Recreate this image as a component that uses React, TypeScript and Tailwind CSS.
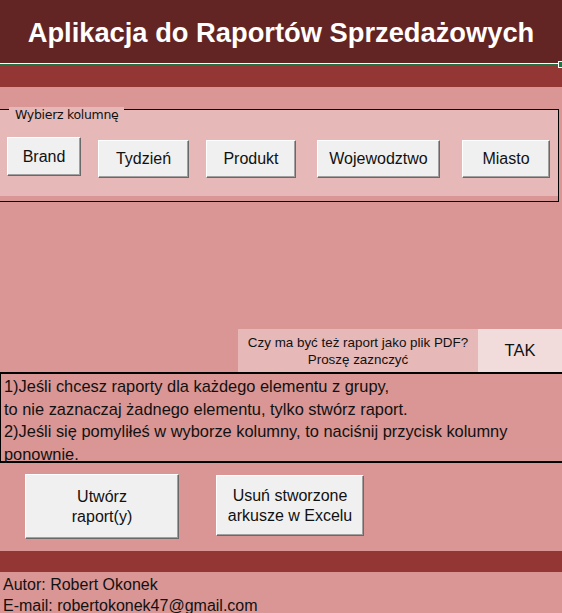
const btn =
  "flex items-center justify-center bg-[#f0f0f0] border border-t-white border-l-white border-r-[#696969] border-b-[#696969] shadow-[inset_-1px_-1px_0_#a0a0a0] text-[16px] text-[#111]";

function ColumnButton({ label, className }: { label: string; className: string }) {
  return <div className={`${btn} ${className}`}>{label}</div>;
}

export default function App() {
  return (
    <div className="w-[562px] h-[613px] overflow-hidden bg-[#d99694] font-['Liberation_Sans',Arial,sans-serif] text-[#111]">
      {/* Header */}
      <div className="h-[63px] bg-[#632523] flex items-center justify-center pt-[2px]">
        <h1 className="text-white font-bold text-[27.3px] leading-none">
          Aplikacja do Raportów Sprzedażowych
        </h1>
      </div>
      <div className="h-px bg-white" />
      <div className="relative h-[2px] bg-[#217346]">
        <div className="absolute right-0 -top-[3px] w-[4px] h-[7px] bg-[#217346] border border-white border-r-0" />
      </div>
      <div className="h-[21px] bg-[#943634]" />
      <div className="h-[22px]" />

      {/* Group box */}
      <div className="relative -ml-px w-[560px] h-[93px] border border-black">
        <div className="h-[86px] bg-[#e6b9b8]">
          <div className="flex items-start pt-[27px]">
            <ColumnButton label="Brand" className="ml-[7px] w-[74px] h-[39px]" />
            <ColumnButton label="Tydzień" className="ml-[17px] mt-[3px] w-[91px] h-[38px]" />
            <ColumnButton label="Produkt" className="ml-[17px] mt-[3px] w-[90px] h-[38px]" />
            <ColumnButton label="Wojewodztwo" className="ml-[21px] mt-[3px] w-[123px] h-[38px]" />
            <ColumnButton label="Miasto" className="ml-[22px] mt-[3px] w-[88px] h-[38px]" />
          </div>
        </div>
        <span className="absolute -top-[3px] left-[9px] px-[6px] bg-[#e6b9b8] text-[12.5px] leading-[16px] font-['DejaVu_Sans',sans-serif] tracking-[-0.3px]">
          Wybierz kolumnę
        </span>
      </div>

      <div className="h-[127px]" />

      {/* PDF question */}
      <div className="flex justify-end h-[43px]">
        <div className="w-[240px] bg-[#e6b9b8] flex flex-col items-center justify-center text-[13.4px] leading-[17px]">
          <span>Czy ma być też raport jako plik PDF?</span>
          <span>Proszę zaznczyć</span>
        </div>
        <div className="w-[84px] bg-[#f2dcdb] flex items-center justify-center text-[16.5px]">TAK</div>
      </div>

      {/* Instructions */}
      <div className="border-t-2 border-b-2 border-l border-black h-[91px] pl-[3px] text-[16.4px] leading-[22.7px] pt-px">
        <p>1)Jeśli chcesz raporty dla każdego elementu z grupy,</p>
        <p>to nie zaznaczaj żadnego elementu, tylko stwórz raport.</p>
        <p>2)Jeśli się pomyliłeś w wyborze kolumny, to naciśnij przycisk kolumny</p>
        <p>ponownie.</p>
      </div>

      {/* Actions */}
      <div className="h-[88px] flex items-start pt-[11px]">
        <div className={`${btn} ml-[25px] w-[154px] h-[65px] flex-col leading-[20px] text-[16.4px]`}>
          <span>Utwórz</span>
          <span>raport(y)</span>
        </div>
        <div className={`${btn} ml-[37px] mt-px w-[148px] h-[61px] flex-col leading-[20px] text-[16.4px]`}>
          <span>Usuń stworzone</span>
          <span>arkusze w Excelu</span>
        </div>
      </div>

      <div className="h-[21px] bg-[#943634]" />

      {/* Footer */}
      <div className="pl-[3px] pt-[2px] text-[16px] leading-[21px]">
        <p>Autor: Robert Okonek</p>
        <p>E-mail: robertokonek47@gmail.com</p>
      </div>
    </div>
  );
}
